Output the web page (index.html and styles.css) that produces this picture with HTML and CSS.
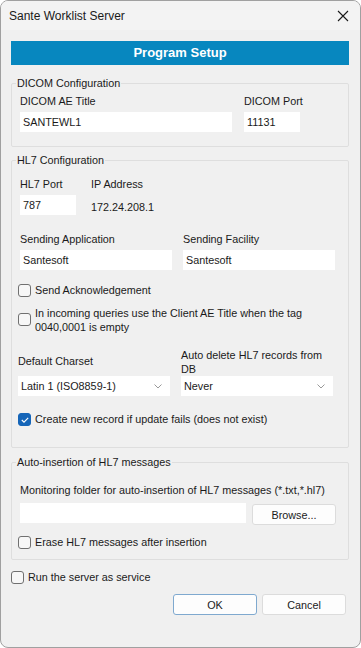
FILE: index.html
```html
<!DOCTYPE html>
<html lang="en">
<head>
  <meta charset="UTF-8" />
  <title>Sante Worklist Server</title>
  <link rel="stylesheet" href="styles.css">
</head>
<body>
  <div class="window">
    <div class="titlebar">
      <span class="title">Sante Worklist Server</span>
      <svg class="close" width="12" height="12" viewBox="0 0 12 12"><path d="M1 1L11 11M11 1L1 11" stroke="#1a1a1a" stroke-width="1.1"/></svg>
    </div>

    <div class="content">
      <div class="banner">Program Setup</div>

      <fieldset class="group dicom">
        <legend>DICOM Configuration</legend>
        <div class="row">
          <div class="field ae">
            <label>DICOM AE Title</label>
            <div class="input">SANTEWL1</div>
          </div>
          <div class="field port">
            <label>DICOM Port</label>
            <div class="input">11131</div>
          </div>
        </div>
      </fieldset>

      <fieldset class="group hl7">
        <legend>HL7 Configuration</legend>
        <div class="row first">
          <div class="field hl7port">
            <label>HL7 Port</label>
            <div class="input">787</div>
          </div>
          <div class="field ip">
            <label>IP Address</label>
            <div class="value">172.24.208.1</div>
          </div>
        </div>
        <div class="row send">
          <div class="field half">
            <label>Sending Application</label>
            <div class="input">Santesoft</div>
          </div>
          <div class="field half">
            <label>Sending Facility</label>
            <div class="input">Santesoft</div>
          </div>
        </div>
        <div class="check ack"><span class="box"></span>Send Acknowledgement</div>
        <div class="check multi"><span class="box"></span><span>In incoming queries use the Client AE Title when the tag 0040,0001 is empty</span></div>
        <div class="row selects">
          <div class="field half">
            <label class="charset">Default Charset</label>
            <div class="select">Latin 1 (ISO8859-1)<svg width="8" height="5" viewBox="0 0 8 5"><path d="M0.5 0.5L4 4L7.5 0.5" fill="none" stroke="#999" stroke-width="1"/></svg></div>
          </div>
          <div class="field half">
            <label class="autodel">Auto delete HL7 records from DB</label>
            <div class="select">Never<svg width="8" height="5" viewBox="0 0 8 5"><path d="M0.5 0.5L4 4L7.5 0.5" fill="none" stroke="#999" stroke-width="1"/></svg></div>
          </div>
        </div>
        <div class="check create"><span class="box checked"><svg width="8" height="6" viewBox="0 0 8 6"><path d="M0.8 3L3 5.2L7.2 0.8" fill="none" stroke="#fff" stroke-width="1.1"/></svg></span>Create new record if update fails (does not exist)</div>
      </fieldset>

      <fieldset class="group auto">
        <legend>Auto-insertion of HL7 messages</legend>
        <div class="monitor">Monitoring folder for auto-insertion of HL7 messages (*.txt,*.hl7)</div>
        <div class="row browse-row">
          <div class="input folder"></div>
          <button class="btn browse">Browse...</button>
        </div>
        <div class="check erase"><span class="box"></span>Erase HL7 messages after insertion</div>
      </fieldset>

      <div class="check service"><span class="box"></span>Run the server as service</div>

      <div class="buttons">
        <button class="btn ok">OK</button>
        <button class="btn">Cancel</button>
      </div>
    </div>
  </div>
</body>
</html>
```

FILE: styles.css
```css
html, body {
  margin: 0;
  padding: 0;
  background: #ffffff;
}
body {
  font-family: "Liberation Sans", Arial, sans-serif;
  font-size: 10.8px;
  color: #1a1a1a;
}
.window {
  width: 361px;
  height: 648px;
  box-sizing: border-box;
  border: 1px solid #a0a0a0;
  border-radius: 8px;
  background: #f0f0f0;
  overflow: hidden;
}
.titlebar {
  height: 29px;
  display: flex;
  align-items: center;
  justify-content: space-between;
  padding: 0 10px 0 8px;
  background: #f3f3f3;
}
.title {
  font-size: 12px;
}
.close {
  margin-right: 1px;
}
.content {
  padding: 11px 11px 0 10px;
}
.banner {
  height: 24px;
  line-height: 24px;
  background: #0787bf;
  color: #fff;
  font-weight: bold;
  font-size: 13px;
  text-align: center;
}
.group {
  margin: 11px 0 0 0;
  padding: 4px 8px 10px 8px;
  border: 1px solid #dedede;
  border-radius: 2px;
}
.group legend {
  padding: 0 1px;
  margin-left: -4px;
  line-height: 14px;
}
.row {
  display: flex;
}
.field label {
  display: block;
  line-height: 14px;
  margin-bottom: 4px;
  white-space: nowrap;
}
.input {
  background: #fff;
  height: 20px;
  line-height: 20px;
  padding: 0 3px;
  box-sizing: border-box;
}
.ae {
  width: 212px;
}
.port {
  width: 56px;
  margin-left: 12px;
}
.dicom {
  padding-bottom: 14px;
}
.hl7 {
  margin-top: 6px;
  padding-bottom: 10px;
}
.hl7 .first {
  padding-top: 6px;
}
.hl7port {
  width: 56px;
}
.ip {
  margin-left: 15px;
}
.value {
  line-height: 20px;
  padding-top: 2px;
}
.send {
  margin-top: 15px;
}
.half {
  width: 152px;
}
.half + .half {
  margin-left: 11px;
}
.check {
  display: flex;
  align-items: flex-start;
  line-height: 14px;
}
.box {
  flex: none;
  width: 11px;
  height: 11px;
  border: 1px solid #707070;
  border-radius: 3px;
  background: #f7f7f7;
  margin: 1px 4px 0 0;
  display: flex;
  align-items: center;
  justify-content: center;
}
.box.checked {
  background: #1565b8;
  border-color: #1565b8;
}
.ack {
  margin: 13px 0 0 -2px;
}
.multi {
  margin: 9px 0 0 -2px;
}
.multi .box {
  margin-top: 7px;
}
.selects {
  margin-top: 14px;
  margin-left: -2px;
  align-items: flex-end;
}
.field label.charset {
  margin-bottom: 8px;
}
.field label.autodel {
  white-space: normal;
  margin-bottom: 0;
}
.select {
  height: 20px;
  background: #fff;
  display: flex;
  align-items: center;
  justify-content: space-between;
  padding: 0 8px 0 3px;
  box-sizing: border-box;
}
.create {
  margin: 16px 0 11px -2px;
}
.auto {
  margin-top: 7px;
}
.monitor {
  margin-top: 10px;
  line-height: 14px;
}
.browse-row {
  margin-top: 6px;
  align-items: flex-start;
}
.folder {
  width: 226px;
}
.btn {
  font-family: "Liberation Sans", Arial, sans-serif;
  font-size: 10.8px;
  color: #1a1a1a;
  background: #fdfdfd;
  border: 1px solid #dcdcdc;
  border-radius: 3px;
  height: 21px;
  width: 84px;
  padding: 0;
}
.browse {
  margin-left: 6px;
  margin-top: 1px;
}
.erase {
  margin: 10px 0 0 -2px;
}
.service {
  margin: 10px 0 0 0;
}
.buttons {
  display: flex;
  justify-content: flex-end;
  gap: 5px;
  margin: 10px 3px 0 0;
}
.ok {
  border-color: #7fa9cf;
}
```
